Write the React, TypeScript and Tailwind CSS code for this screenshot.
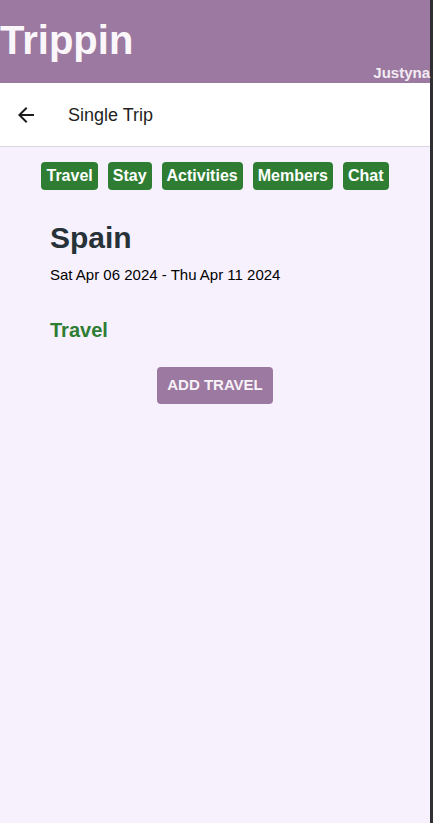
import React from "react";

const tabs = ["Travel", "Stay", "Activities", "Members", "Chat"];

export default function App() {
  return (
    <div className="flex min-h-screen w-full" style={{ fontFamily: '"Liberation Sans", Arial, sans-serif' }}>
      <div className="flex flex-1 flex-col bg-[#f7f1fd]">
        <header className="relative h-[83px] bg-[#9c79a0]">
          <h1 className="pt-[17px] text-[40px] font-bold leading-[46px] text-[#faf6fa]">Trippin</h1>
          <span className="absolute bottom-[1px] right-0 text-[15px] font-bold leading-[18px] text-[#f3ecf4]">Justyna</span>
        </header>
        <nav className="flex h-[64px] items-center border-b border-[#ddd6e2] bg-white">
          <svg className="ml-[14px] h-[24px] w-[24px] text-[#1c1c1c]" viewBox="0 0 24 24" fill="currentColor">
            <path d="M20 11H7.83l5.59-5.59L12 4l-8 8 8 8 1.41-1.41L7.83 13H20v-2z" />
          </svg>
          <span className="ml-[30px] text-[18px] leading-[24px] text-[#1f1f24]">Single Trip</span>
        </nav>
        <div className="mt-[15px] flex justify-center gap-[10px]">
          {tabs.map((t) => (
            <button key={t} className="h-[28px] rounded-[4px] bg-[#2e7d32] px-[5px] text-[16px] font-bold leading-[28px] text-white">
              {t}
            </button>
          ))}
        </div>
        <div className="px-[50px]">
          <h2 className="mt-[30px] text-[30px] font-bold leading-[36px] text-[#263238]">Spain</h2>
          <p className="mt-[9px] text-[15px] leading-[20px] text-black">Sat Apr 06 2024 - Thu Apr 11 2024</p>
          <h3 className="mt-[33px] text-[20px] font-bold leading-[24px] text-[#2e7d32]">Travel</h3>
        </div>
        <div className="mt-[25px] flex justify-center">
          <button className="h-[37px] rounded-[4px] bg-[#9c79a0] px-[10px] text-[15px] font-bold text-[#f7f1f8]">ADD TRAVEL</button>
        </div>
      </div>
      <div className="w-[3px] bg-[#303034]" />
    </div>
  );
}
